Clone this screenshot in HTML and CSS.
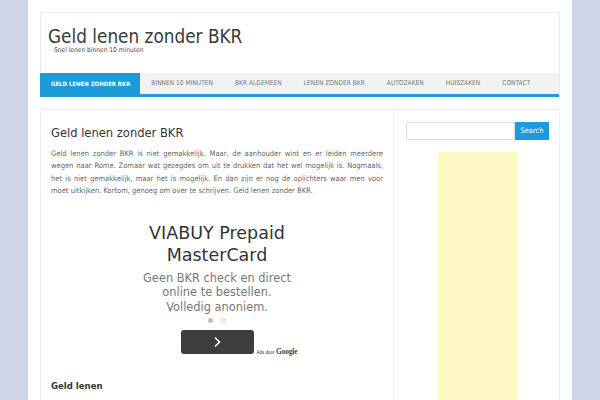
FILE: index.html
```html
<!DOCTYPE html>
<html lang="nl">
<head>
<meta charset="utf-8">
<title>Geld lenen zonder BKR</title>
<link rel="stylesheet" href="styles.css">
</head>
<body>
<div class="page">
  <header class="masthead">
    <div class="branding">
      <h1 class="site-title">Geld lenen zonder BKR</h1>
      <p class="tagline">Snel lenen binnen 10 minuten</p>
    </div>
    <nav class="mainnav">
      <a class="nav-item active" href="#">GELD LENEN ZONDER BKR</a>
      <a class="nav-item" href="#">BINNEN 10 MINUTEN</a>
      <a class="nav-item" href="#">BKR ALGEMEEN</a>
      <a class="nav-item" href="#">LENEN ZONDER BKR</a>
      <a class="nav-item" href="#">AUTOZAKEN</a>
      <a class="nav-item" href="#">HUISZAKEN</a>
      <a class="nav-item" href="#">CONTACT</a>
    </nav>
  </header>
  <div class="content">
    <main class="main-box">
      <h2 class="entry-title">Geld lenen zonder BKR</h2>
      <p class="entry-text">Geld lenen zonder BKR is niet gemakkelijk. Maar, de aanhouder wint en er leiden meerdere wegen naar Rome. Zomaar wat gezegdes om uit te drukken dat het wel mogelijk is. Nogmaals, het is niet gemakkelijk, maar het is mogelijk. En dan zijn er nog de oplichters waar men voor moet uitkijken. Kortom, genoeg om over te schrijven. Geld lenen zonder BKR.</p>
      <div class="ad">
        <div class="ad-title">VIABUY Prepaid<br>MasterCard</div>
        <div class="ad-desc">Geen BKR check en direct<br>online te bestellen.<br>Volledig anoniem.</div>
        <div class="ad-dots"><span class="dot filled"></span><span class="dot"></span></div>
        <div class="ad-row">
          <span></span>
          <a class="ad-btn" href="#"><svg width="10" height="12" viewBox="0 0 10 12"><path d="M3 1.5 L7.5 6 L3 10.5" fill="none" stroke="#fff" stroke-width="1.6"/></svg></a>
          <span class="ad-label"><span class="ads-door">Ads door</span><span class="google">Google</span></span>
        </div>
      </div>
      <h3 class="sub-title">Geld lenen</h3>
    </main>
    <aside class="sidebar">
      <form class="search">
        <input class="search-input" type="text">
        <button class="search-btn" type="button">Search</button>
      </form>
      <div class="ad-yellow"></div>
    </aside>
  </div>
</div>
</body>
</html>
```

FILE: styles.css
```css
html, body {
  margin: 0;
  padding: 0;
}
body {
  background: #cfd4e9;
  font-family: "DejaVu Sans Condensed", "DejaVu Sans", sans-serif;
  font-stretch: condensed;
  color: #666;
  height: 400px;
  overflow: hidden;
}
.page {
  width: 520px;
  height: 388px;
  margin-left: 28px;
  padding: 12px 12px 0;
  background: #fff;
  overflow: hidden;
}
.masthead {
  border: 1px solid #ececec;
  border-bottom: none;
}
.branding {
  padding: 14px 7px 19px;
}
.site-title {
  margin: 0;
  font-size: 18.8px;
  line-height: 20px;
  font-weight: normal;
  color: #3a3a3a;
}
.tagline {
  margin: -0.5px 0 0 6px;
  font-size: 6.6px;
  line-height: 7px;
  color: #444;
}
.mainnav {
  display: flex;
  background: #f2f2f2;
  border-bottom: 3px solid #1d9ad8;
  margin: 0 0 0 -1px;
}
.nav-item {
  display: block;
  padding: 0 11px;
  line-height: 21px;
  font-size: 6.6px;
  color: #777;
  text-decoration: none;
}
.nav-item.active {
  background: #1d9ad8;
  color: #fff;
  font-weight: bold;
  font-size: 6px;
  padding: 0 10px 0 11px;
}
.content {
  display: grid;
  grid-template-columns: 354px 166px;
  margin-top: 12px;
}
.main-box {
  border: 1px solid #efefef;
  padding: 15px 10px 0;
  height: 290px;
}
.sidebar {
  border: 1px solid #efefef;
  border-left: none;
  padding: 12px 10px 0 12px;
  height: 290px;
}
.entry-title {
  margin: 0;
  font-size: 12.8px;
  line-height: 16px;
  font-weight: normal;
  color: #333;
}
.entry-text {
  margin: 7.7px 0 0;
  font-size: 7.5px;
  line-height: 12.3px;
  text-align: justify;
  color: #666;
}
.ad {
  margin-top: 26px;
  text-align: center;
  font-family: "DejaVu Sans", sans-serif;
  font-stretch: normal;
}
.ad-title {
  font-size: 17.5px;
  line-height: 21.7px;
  color: #333;
}
.ad-desc {
  margin-top: 4px;
  font-size: 11.4px;
  line-height: 14.5px;
  color: #777;
}
.ad-dots {
  display: flex;
  justify-content: center;
  gap: 8px;
  margin-top: 3.6px;
  height: 5px;
}
.dot {
  width: 5px;
  height: 5px;
  box-sizing: border-box;
  border-radius: 50%;
  border: 1px solid #ccc;
}
.dot.filled {
  background: #bbb;
  border-color: #bbb;
}
.ad-row {
  display: grid;
  grid-template-columns: 1fr auto 1fr;
  margin-top: 7.5px;
}
.ad-btn {
  width: 73px;
  height: 24px;
  border-radius: 3px;
  background: #3d3d3d;
  display: flex;
  align-items: center;
  justify-content: center;
}
.ad-label {
  justify-self: start;
  align-self: end;
  margin: 0 0 -3px 3px;
  white-space: nowrap;
  color: #333;
  line-height: 8px;
}
.ads-door {
  font-family: "Liberation Sans", sans-serif;
  font-size: 4.5px;
  margin-right: 1.5px;
}
.google {
  font-family: "Liberation Serif", serif;
  font-size: 7.5px;
  letter-spacing: -0.2px;
  color: #444;
  font-weight: bold;
}
.sub-title {
  margin: 26px 0 0;
  font-size: 9.5px;
  line-height: 12px;
  font-weight: bold;
  color: #333;
}
.search {
  display: flex;
  margin: 0;
}
.search-input {
  width: 109px;
  height: 18px;
  box-sizing: border-box;
  border: 1px solid #ddd;
  margin: 0;
  padding: 0;
  outline: none;
}
.search-btn {
  width: 34px;
  height: 18px;
  border: none;
  margin: 0;
  padding: 0;
  background: #1d9ad8;
  color: #fff;
  font-family: "DejaVu Sans Condensed", "DejaVu Sans", sans-serif;
  font-stretch: condensed;
  font-size: 7.5px;
}
.ad-yellow {
  width: 80px;
  height: 250px;
  margin: 12px auto 0;
  background: #fef8c2;
}
```
